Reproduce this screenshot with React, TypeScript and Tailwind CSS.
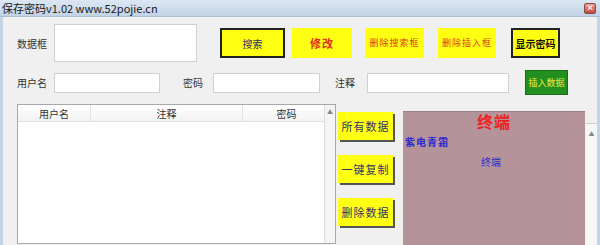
import React from "react";

const cjk = { fontFamily: '"Noto Sans CJK SC", "Noto Sans", sans-serif' };

export default function App() {
  return (
    <div
      className="w-[600px] h-[245px] overflow-hidden flex flex-col bg-[#f0f0f0] text-[10px] text-[#222] whitespace-nowrap"
      style={cjk}
    >
      {/* title bar */}
      <div className="h-[17px] shrink-0 flex items-center justify-between bg-gradient-to-b from-[#dce7f3] to-[#c2d3e6] border-b border-[#a9bdd3]">
        <span className="pl-[2px] text-[11px] leading-none text-[#1a1a1a]">保存密码v1.02 www.52pojie.cn</span>
        <div className="mr-[4px] w-[12px] h-[11px] bg-gradient-to-b from-[#e8a09a] to-[#c2473c] border border-[#8a4a44] rounded-[2px] flex items-center justify-center text-[8px] leading-none text-white font-bold">
          ×
        </div>
      </div>
      {/* body */}
      <div className="flex-1 flex flex-col border-l-[3px] border-r-[3px] border-[#c5d4e4] bg-[#f0f0f0]">
        {/* row 1 */}
        <div className="flex items-start mt-[7px] h-[38px]">
          <span className="ml-[14px] w-[37px] self-center text-[10px] text-[#333]">数据框</span>
          <div className="w-[143px] h-[38px] bg-white border border-[#d0d0d0]" />
          <button className="ml-[23px] mt-[4px] w-[65px] h-[30px] bg-[#ffff14] border-2 border-[#222] text-[10px] text-[#2c2c6c]">搜索</button>
          <button className="ml-[7px] mt-[4px] w-[60px] h-[30px] bg-[#ffff14] text-[11px] font-bold text-[#e0301a] tracking-[1px]">修改</button>
          <button className="ml-[13px] mt-[4px] w-[59px] h-[30px] bg-[#ffff14] text-[9px] text-[#e04018] tracking-[1px]">删除搜索框</button>
          <button className="ml-[14px] mt-[4px] w-[58px] h-[30px] bg-[#ffff14] text-[9px] text-[#e04018] tracking-[1px]">删除插入框</button>
          <button className="ml-[15px] mt-[4px] w-[49px] h-[30px] bg-[#ffff14] border-2 border-[#222] text-[10px] font-bold text-[#111]">显示密码</button>
        </div>
        {/* row 2 */}
        <div className="flex items-center mt-[8px] h-[25px]">
          <span className="ml-[14px] w-[37px] text-[10px] text-[#333]">用户名</span>
          <div className="w-[106px] h-[20px] bg-white border border-[#d0d0d0]" />
          <span className="ml-[23px] w-[30px] text-[10px] text-[#333]">密码</span>
          <div className="w-[107px] h-[20px] bg-white border border-[#d0d0d0]" />
          <span className="ml-[15px] w-[32px] text-[10px] text-[#333]">注释</span>
          <div className="w-[142px] h-[20px] bg-white border border-[#d0d0d0]" />
          <button className="ml-[16px] w-[43px] h-[25px] bg-[#22901f] border border-[#1a6a18] text-[9px] text-[#f2e640]">插入数据</button>
        </div>
        {/* row 3 */}
        <div className="flex items-start mt-[9px] flex-1">
          {/* table */}
          <div className="ml-[14px] w-[319px] h-[140px] bg-white border border-[#a8a8a8] flex">
            <div className="w-[306px] flex flex-col">
              <div className="h-[17px] flex border-b border-[#e0e0e0] bg-gradient-to-b from-white to-[#f3f3f3] text-[10px] text-[#333]">
                <div className="w-[73px] text-center border-r border-[#e3e3e3] leading-[17px]">用户名</div>
                <div className="w-[152px] text-center border-r border-[#e3e3e3] leading-[17px]">注释</div>
                <div className="flex-1 text-center leading-[17px] pl-[6px]">密码</div>
              </div>
            </div>
            <div className="flex-1 border-l border-[#dcdcdc] bg-[#f4f4f4] flex justify-center">
              <span className="text-[6px] text-[#888] leading-[12px] mt-[1px]">▲</span>
            </div>
          </div>
          {/* side buttons */}
          <div className="flex flex-col ml-[2px] mt-[8px] gap-[15px]">
            <button className="w-[55px] h-[28px] bg-[#ffff14] shadow-[2px_2px_0_#555] text-[11px] tracking-[1px] text-[#33336a]">所有数据</button>
            <button className="w-[55px] h-[28px] bg-[#ffff14] shadow-[2px_2px_0_#555] text-[11px] tracking-[1px] text-[#33336a]">一键复制</button>
            <button className="w-[55px] h-[28px] bg-[#ffff14] shadow-[2px_2px_0_#555] text-[11px] tracking-[1px] text-[#33336a]">删除数据</button>
          </div>
          {/* pink panel */}
          <div className="ml-[10px] mt-[7px] w-[182px] h-[140px] bg-[#b5939a] border-t border-[#9a7e84] flex flex-col">
            <div className="text-center text-[16px] font-bold text-[#ee2020] leading-[18px] tracking-[1px]">终端</div>
            <div className="ml-[2px] mt-[4px] text-[10px] font-bold text-[#2a2ad0] tracking-[1px]">紫电青霜</div>
            <div className="ml-[78px] mt-[5px] text-[10px] text-[#2a2ad0]">终端</div>
          </div>
          {/* right scroll strip */}
          <div className="mt-[19px] ml-[1px] w-[11px] h-[130px] border-t border-[#cfcfcf] bg-[#f7f7f7] flex justify-center">
            <span className="text-[6px] text-[#888] leading-[12px] mt-[4px]">▲</span>
          </div>
        </div>
      </div>
    </div>
  );
}
